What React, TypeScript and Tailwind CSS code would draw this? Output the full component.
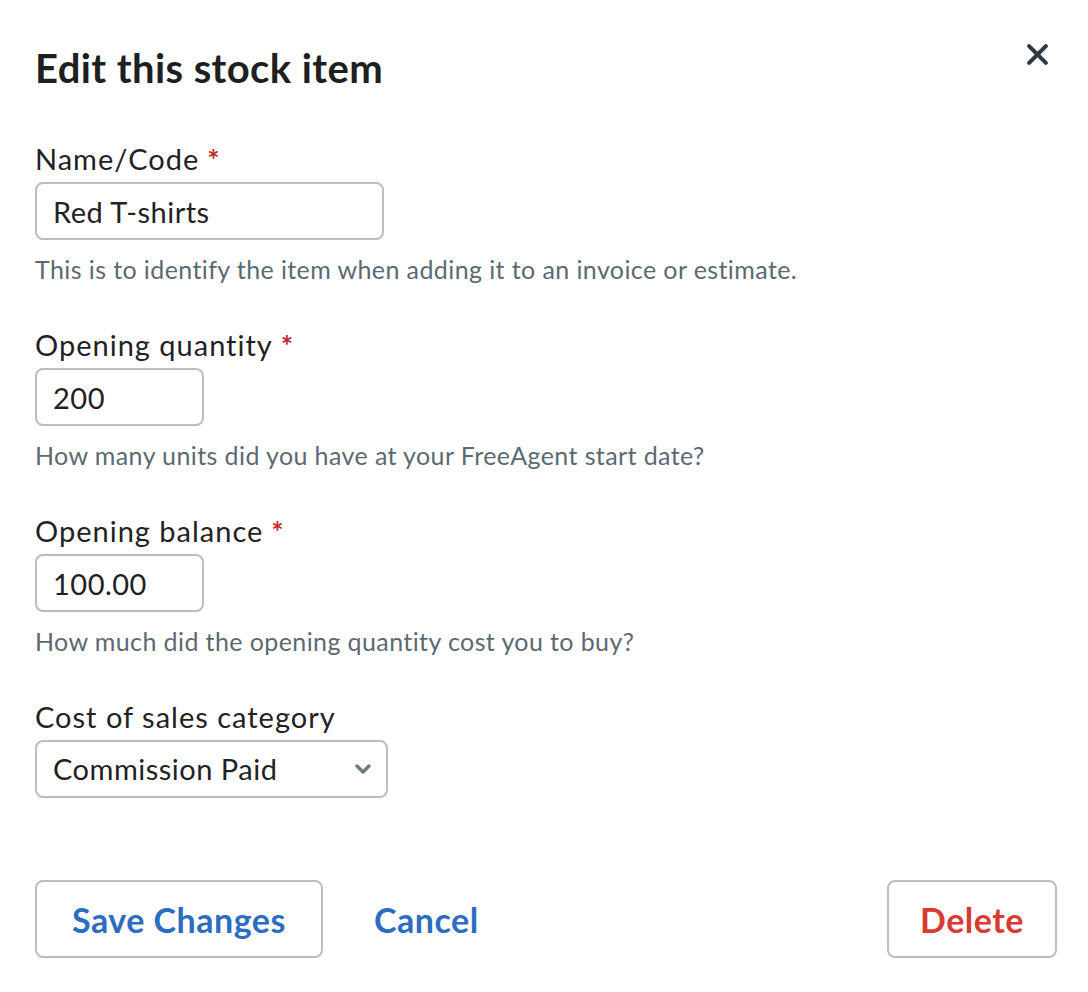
import React from 'react';

const font = { fontFamily: 'Lato, "Open Sans", sans-serif' };

const Field: React.FC<{ label: string; required?: boolean; hint?: string; children: React.ReactNode }> = ({ label, required, hint, children }) => (
    <div className="flex flex-col">
        <label className="text-[29px] leading-[36px] tracking-[1px] text-[#1f2224]">
            {label}
            {required && <span className="ml-2 font-bold text-[#c22a2a]">*</span>}
        </label>
        <div className="mt-[5px]">{children}</div>
        {hint && <p className="mt-[13px] text-[25px] leading-[32px] tracking-[0.4px] text-[#5b6a72]">{hint}</p>}
    </div>
);

const inputCls = 'h-[58px] rounded-[8px] border-2 border-[#b9bec2] bg-white px-[16px] text-[29px] tracking-[0.5px] text-[#1f2224] outline-none';

export default function App() {
    return (
        <div className="min-h-screen bg-white text-[#1f2224]" style={font}>
            <div className="pl-[35px] pr-[31px] pt-[40px]">
                <div className="flex items-start justify-between">
                    <h2 className="text-[40px] font-bold leading-[56px] tracking-[0.4px] text-[#1d1f21]">Edit this stock item</h2>
                    <button className="mr-[4px] -mt-[1px] p-1 text-[#2f3a40]" aria-label="Close">
                        <svg width="23" height="23" viewBox="0 0 22 22" fill="none" stroke="currentColor" strokeWidth="4" strokeLinecap="round">
                            <path d="M3 3l16 16M19 3L3 19" />
                        </svg>
                    </button>
                </div>

                <div className="mt-[45px] flex flex-col gap-[42px]">
                    <Field label="Name/Code" required hint="This is to identify the item when adding it to an invoice or estimate.">
                        <input className={`${inputCls} w-[349px]`} defaultValue="Red T-shirts" style={font} />
                    </Field>
                    <Field label="Opening quantity" required hint="How many units did you have at your FreeAgent start date?">
                        <input className={`${inputCls} w-[169px]`} defaultValue="200" style={font} />
                    </Field>
                    <Field label="Opening balance" required hint="How much did the opening quantity cost you to buy?">
                        <input className={`${inputCls} w-[169px]`} defaultValue="100.00" style={font} />
                    </Field>
                    <Field label="Cost of sales category">
                        <div className={`${inputCls} flex w-[353px] items-center justify-between pr-[13px]`}>
                            <span>Commission Paid</span>
                            <svg width="20" height="12" viewBox="0 0 20 12" fill="none" stroke="#6f7a82" strokeWidth="3.5" strokeLinecap="round" strokeLinejoin="round">
                                <path d="M4 3L10 9L16 3" />
                            </svg>
                        </div>
                    </Field>
                </div>

                <div className="mt-[82px] flex items-center justify-between">
                    <div className="flex items-center gap-[51px]">
                        <button className="h-[78px] w-[288px] rounded-[8px] border-2 border-[#b9bec2] text-[34px] font-bold tracking-[0.5px] text-[#2c6dbf]" style={font}>Save Changes</button>
                        <button className="text-[34px] font-bold tracking-[0.5px] text-[#2c6dbf]" style={font}>Cancel</button>
                    </div>
                    <button className="h-[78px] w-[170px] rounded-[8px] border-2 border-[#b9bec2] text-[34px] font-bold tracking-[0.5px] text-[#d93a31]" style={font}>Delete</button>
                </div>
            </div>
        </div>
    );
}
